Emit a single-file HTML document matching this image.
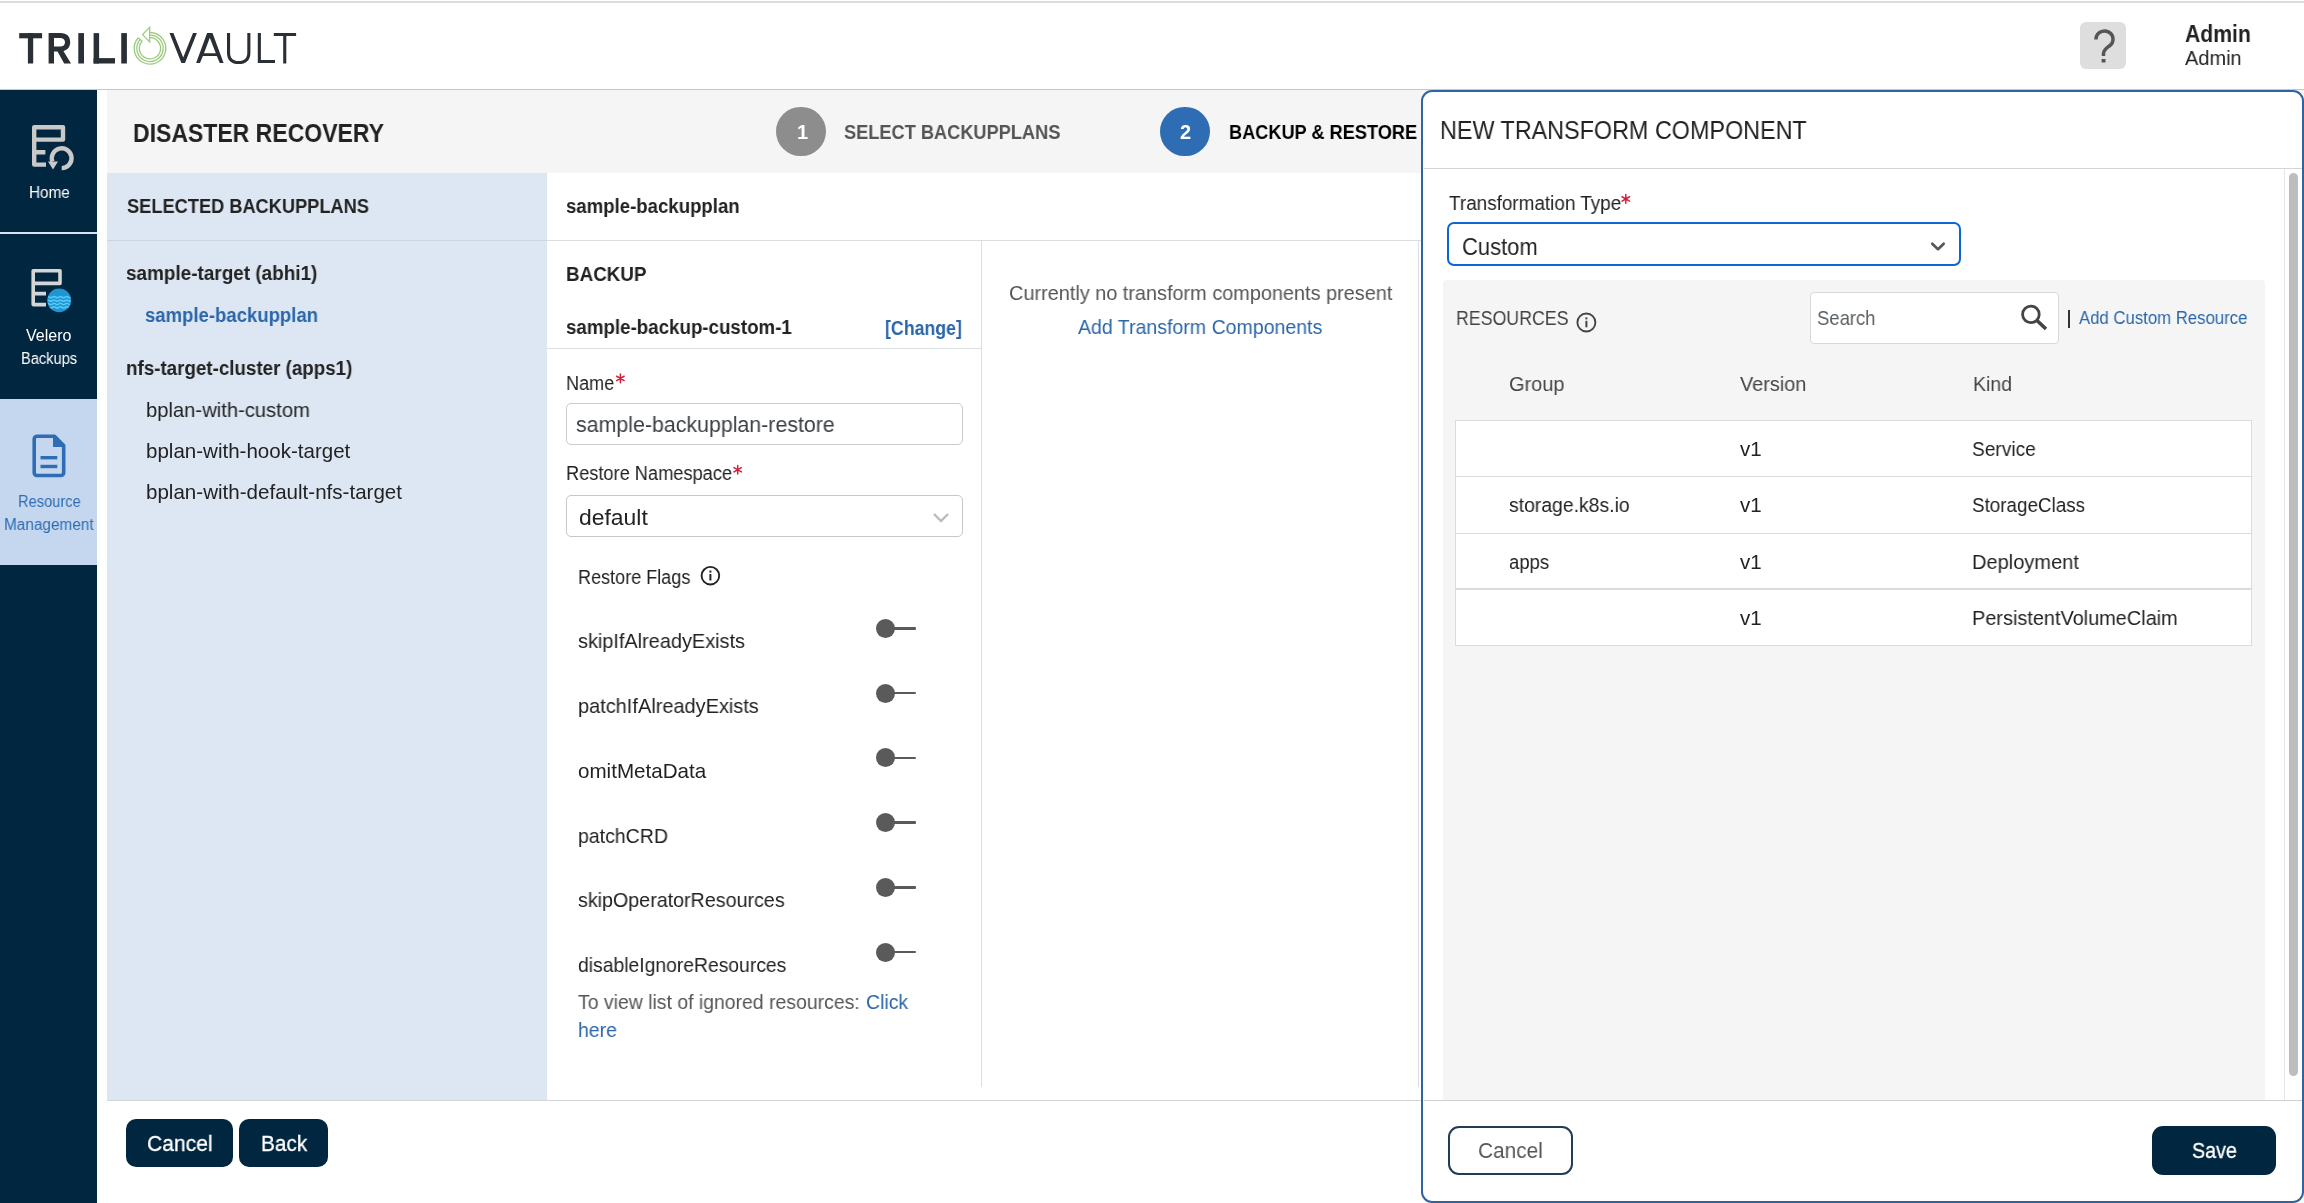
<!DOCTYPE html>
<html><head><meta charset="utf-8"><title>TrilioVault</title>
<style>
html,body{margin:0;padding:0;}
body{width:2304px;height:1203px;overflow:hidden;position:relative;background:#fff;font-family:"Liberation Sans",sans-serif;}
.t{position:absolute;white-space:nowrap;will-change:transform;}
.b{position:absolute;}
svg.b{overflow:visible;}
</style></head><body>
<div class="b" style="left:0px;top:1px;width:2304px;height:2px;background:#dcdcdc"></div>
<div class="b" style="left:0px;top:89px;width:2304px;height:1px;background:#c6c6c6"></div>
<div class="b" style="left:0px;top:90px;width:97px;height:1113px;background:#012740"></div>
<div class="b" style="left:0px;top:232px;width:97px;height:2px;background:#dbe3ec"></div>
<div class="b" style="left:0px;top:399px;width:97px;height:166px;background:#c5d7ee"></div>
<div class="b" style="left:107px;top:90px;width:2197px;height:83px;background:#f5f5f5"></div>
<div class="b" style="left:107px;top:173px;width:440px;height:928px;background:#dde7f3"></div>
<div class="b" style="left:107px;top:240px;width:440px;height:1px;background:#cad5e0"></div>
<div class="b" style="left:547px;top:240px;width:1757px;height:1px;background:#d9dee2"></div>
<div class="b" style="left:547px;top:348px;width:435px;height:1px;background:#d9dee2"></div>
<div class="b" style="left:981px;top:241px;width:1px;height:846px;background:#dcdfe2"></div>
<div class="b" style="left:1418px;top:241px;width:1px;height:846px;background:#dcdfe2"></div>
<div class="b" style="left:107px;top:1100px;width:2197px;height:1px;background:#d3d7db"></div>
<svg class="b" style="left:0;top:0" width="320" height="89" viewBox="0 0 320 89">
<g fill="#2a2f36">
<rect x="19.2" y="33.1" width="22.9" height="5.2"/><rect x="27.9" y="33.1" width="5.3" height="30.4"/>
<path d="M48.6 33.1H60.5C67 33.1 70.2 37 70.2 42.2C70.2 46.6 67.6 50 63.4 51L71 63.5H64.2L57.5 51.4H54V63.5H48.6ZM54 38.1V46.6H60C63.3 46.6 65 45 65 42.3C65 39.7 63.3 38.1 60 38.1Z"/>
<rect x="78.3" y="33.1" width="5.7" height="30.4"/>
<rect x="93.6" y="33.1" width="5.5" height="30.4"/><rect x="93.6" y="58.1" width="21.4" height="5.4"/>
<rect x="121.25" y="33.1" width="5.65" height="30.4"/>
</g>
<g fill="#2a2f36">
<path d="M169.5 33.1H173.4L183.2 57.6L193 33.1H196.9L185 63.1H181.4Z"/>
<path d="M196.1 63.1L207.1 33.1H212.5L223.6 63.1H219.8L216.8 55.9H202.9L200 63.1ZM204 53.3H215.8L209.8 37.8Z"/>
<path d="M227 33.1H230.1V52.7C230.1 58 233 61 238.7 61C244.4 61 247.3 58 247.3 52.7V33.1H250.4V52.9C250.4 60 246 64.1 238.7 64.1C231.4 64.1 227 60 227 52.9Z"/>
<path d="M257.8 33.1H260.9V59.9H275V63.1H257.8Z"/>
<path d="M273.8 33H296.1V35.9H286.3V63.4H283.2V35.9H273.8Z"/>
</g>
<g fill="none" stroke="#9bcb7c" stroke-width="1.3">
<path d="M138.26 37.73A15.8 15.8 0 1 0 150 32.5"/>
<path d="M140.19 39.47A13.2 13.2 0 1 0 150 35.1"/>
<path d="M142.12 41.21A10.6 10.6 0 1 0 150 37.7"/>
<path d="M149.6 27.4L142.6 34.6L149.6 41.9Z" stroke-linejoin="miter"/>
<path d="M138.26 37.73L142.12 41.21"/>
</g>
</svg>
<div class="b" style="left:2080px;top:22px;width:46px;height:47px;background:#dedede;border-radius:6px"></div>
<svg class="b" style="left:2081px;top:22.8px" width="46" height="47" viewBox="0 0 46 47">
<path d="M15 16.5A8.5 8.2 0 1 1 28.3 23C25.3 25.3 22.5 27 22.5 30.5V33" fill="none" stroke="#555" stroke-width="3.5"/>
<rect x="20.6" y="36" width="3.9" height="3.5" fill="#555"/>
</svg>
<div class="t" style="left:2185.40px;top:19.38px;font-size:24px;line-height:29px;color:#222;font-weight:700;transform:scaleX(0.8822);transform-origin:0 0;">Admin</div>
<div class="t" style="left:2185.40px;top:44.82px;font-size:21px;line-height:25px;color:#222;transform:scaleX(0.9513);transform-origin:0 0;">Admin</div>
<svg class="b" style="left:0;top:90px" width="97" height="500" viewBox="0 90 97 500">
<g fill="none" stroke="#c9c9c9" stroke-width="4.4" stroke-linejoin="round">
<path d="M46 164.6H34.2V127.2H63V139.6H34.2M34.2 152.3H45.4"/>
<path d="M61.7 168.1A9.9 9.9 0 1 0 52.4 161.6"/>
</g>
<path d="M48 161.5L58 161.5L53 169.5Z" fill="#c9c9c9"/>
<g fill="none" stroke="#d5d5d5" stroke-width="3.6" stroke-linejoin="round">
<path d="M46 304.6H33.2V270.7H60V283.4H33.2M33.2 293.6H46"/>
</g>
<circle cx="59.2" cy="300.4" r="11.9" fill="#1e96d4"/>
<clipPath id="vc"><circle cx="59.2" cy="300.4" r="11.6"/></clipPath>
<g fill="none" stroke="#58c9f6" stroke-width="1.5" clip-path="url(#vc)">
<path d="M46 297.2q1.6 -1.3 3.2 0t3.2 0t3.2 0t3.2 0t3.2 0t3.2 0t3.2 0t3.2 0"/>
<path d="M46 300.6q1.6 -1.3 3.2 0t3.2 0t3.2 0t3.2 0t3.2 0t3.2 0t3.2 0t3.2 0"/>
<path d="M46 304q1.6 -1.3 3.2 0t3.2 0t3.2 0t3.2 0t3.2 0t3.2 0t3.2 0t3.2 0"/>
<path d="M46 307.4q1.6 -1.3 3.2 0t3.2 0t3.2 0t3.2 0t3.2 0t3.2 0t3.2 0t3.2 0"/>
</g>
<g fill="none" stroke="#2e6db4" stroke-width="3.6" stroke-linejoin="round">
<path d="M37 436.3H54.5L63.7 445.5V472.7A2.8 2.8 0 0 1 60.9 475.5H37A2.8 2.8 0 0 1 34.2 472.7V439.1A2.8 2.8 0 0 1 37 436.3Z"/>
</g>
<path d="M53 436.3L63.7 447H53Z" fill="#2e6db4"/>
<rect x="40.5" y="456" width="16.8" height="3.4" fill="#2e6db4"/>
<rect x="40.5" y="464.8" width="16.8" height="3.4" fill="#2e6db4"/>
</svg>
<div class="t" style="left:28.50px;top:182.75px;font-size:16px;line-height:19px;color:#fff;transform:scaleX(0.9555);transform-origin:0 0;">Home</div>
<div class="t" style="left:26.20px;top:325.95px;font-size:16px;line-height:19px;color:#fff;transform:scaleX(0.9956);transform-origin:0 0;">Velero</div>
<div class="t" style="left:20.90px;top:348.65px;font-size:16px;line-height:19px;color:#fff;transform:scaleX(0.9153);transform-origin:0 0;">Backups</div>
<div class="t" style="left:17.50px;top:491.95px;font-size:16px;line-height:19px;color:#2e6db4;transform:scaleX(0.9168);transform-origin:0 0;">Resource</div>
<div class="t" style="left:3.80px;top:514.65px;font-size:16px;line-height:19px;color:#2e6db4;transform:scaleX(0.9593);transform-origin:0 0;">Management</div>
<div class="t" style="left:133.40px;top:116.61px;font-size:26.5px;line-height:32px;color:#222;font-weight:700;transform:scaleX(0.8682);transform-origin:0 0;">DISASTER RECOVERY</div>
<div class="b" style="left:776.25px;top:106.5px;width:49.5px;height:49.5px;background:#8d8d8d;border-radius:50%"></div>
<div class="t" style="left:796.70px;top:119.87px;font-size:20px;line-height:24px;color:#fff;font-weight:700;">1</div>
<div class="t" style="left:844.00px;top:119.32px;font-size:21px;line-height:25px;color:#555;font-weight:700;transform:scaleX(0.8666);transform-origin:0 0;">SELECT BACKUPPLANS</div>
<div class="b" style="left:1160.2px;top:106.5px;width:49.5px;height:49.5px;background:#2e6db4;border-radius:50%"></div>
<div class="t" style="left:1180.00px;top:119.87px;font-size:20px;line-height:24px;color:#fff;font-weight:700;">2</div>
<div class="t" style="left:1228.80px;top:119.32px;font-size:21px;line-height:25px;color:#000;font-weight:700;transform:scaleX(0.8648);transform-origin:0 0;">BACKUP & RESTORE</div>
<div class="t" style="left:126.70px;top:194.37px;font-size:20px;line-height:24px;color:#222;font-weight:700;transform:scaleX(0.9111);transform-origin:0 0;">SELECTED BACKUPPLANS</div>
<div class="t" style="left:125.90px;top:261.47px;font-size:20px;line-height:24px;color:#222;font-weight:700;transform:scaleX(0.9461);transform-origin:0 0;">sample-target (abhi1)</div>
<div class="t" style="left:144.70px;top:303.07px;font-size:20px;line-height:24px;color:#2a66a8;font-weight:700;transform:scaleX(0.9266);transform-origin:0 0;">sample-backupplan</div>
<div class="t" style="left:125.90px;top:356.47px;font-size:20px;line-height:24px;color:#222;font-weight:700;transform:scaleX(0.9386);transform-origin:0 0;">nfs-target-cluster (apps1)</div>
<div class="t" style="left:145.60px;top:398.26px;font-size:20.3px;line-height:24px;color:#222;transform:scaleX(0.9957);transform-origin:0 0;">bplan-with-custom</div>
<div class="t" style="left:145.60px;top:438.66px;font-size:20.3px;line-height:24px;color:#222;transform:scaleX(1.0124);transform-origin:0 0;">bplan-with-hook-target</div>
<div class="t" style="left:145.60px;top:480.36px;font-size:20.3px;line-height:24px;color:#222;transform:scaleX(1.0138);transform-origin:0 0;">bplan-with-default-nfs-target</div>
<div class="t" style="left:565.60px;top:194.27px;font-size:20px;line-height:24px;color:#222;font-weight:700;transform:scaleX(0.9298);transform-origin:0 0;">sample-backupplan</div>
<div class="t" style="left:565.60px;top:261.57px;font-size:20px;line-height:24px;color:#222;font-weight:700;transform:scaleX(0.9404);transform-origin:0 0;">BACKUP</div>
<div class="t" style="left:565.60px;top:315.27px;font-size:20px;line-height:24px;color:#222;font-weight:700;transform:scaleX(0.9362);transform-origin:0 0;">sample-backup-custom-1</div>
<div class="t" style="left:885.00px;top:314.99px;font-size:20.5px;line-height:25px;color:#2a66a8;font-weight:700;transform:scaleX(0.8660);transform-origin:0 0;">[Change]</div>
<div class="t" style="left:566.40px;top:370.77px;font-size:20px;line-height:24px;color:#222;transform:scaleX(0.9045);transform-origin:0 0;">Name</div>
<svg class="b" style="left:0;top:0" width="1" height="1"><path d="M620.40 374.10L620.40 382.70M616.68 376.25L624.12 380.55M624.12 376.25L616.68 380.55" stroke="#d0213a" stroke-width="1.5" stroke-linecap="round"/></svg>
<div class="b" style="left:565.5px;top:403.4px;width:397.7px;height:41.9px;border:1.3px solid #c8ccd0;border-radius:5px;box-sizing:border-box;background:#fff"></div>
<div class="t" style="left:576.40px;top:412.27px;font-size:22px;line-height:26px;color:#3a3f44;transform:scaleX(0.9707);transform-origin:0 0;">sample-backupplan-restore</div>
<div class="t" style="left:566.40px;top:461.37px;font-size:20px;line-height:24px;color:#222;transform:scaleX(0.9106);transform-origin:0 0;">Restore Namespace</div>
<svg class="b" style="left:0;top:0" width="1" height="1"><path d="M737.70 465.50L737.70 474.10M733.98 467.65L741.42 471.95M741.42 467.65L733.98 471.95" stroke="#d0213a" stroke-width="1.5" stroke-linecap="round"/></svg>
<div class="b" style="left:565.5px;top:494.5px;width:397.7px;height:42px;border:1.3px solid #c8c8c8;border-radius:5px;box-sizing:border-box;background:#fff"></div>
<div class="t" style="left:579.10px;top:503.70px;font-size:22.5px;line-height:27px;color:#222;transform:scaleX(1.0178);transform-origin:0 0;">default</div>
<svg class="b" style="left:930px;top:508px" width="22" height="20"><path d="M4 6L11 13L18 6" fill="none" stroke="#bbb" stroke-width="2.4"/></svg>
<div class="t" style="left:578.40px;top:565.21px;font-size:19.6px;line-height:24px;color:#222;transform:scaleX(0.9213);transform-origin:0 0;">Restore Flags</div>
<svg class="b" style="left:698px;top:564px" width="25" height="25"><circle cx="12.4" cy="11.7" r="8.8" fill="none" stroke="#222" stroke-width="1.9"/><rect x="11.4" y="10" width="2" height="6.5" fill="#222"/><rect x="11.4" y="6.6" width="2" height="2" fill="#222"/></svg>
<div class="t" style="left:578.40px;top:629.26px;font-size:20.3px;line-height:24px;color:#222;transform:scaleX(0.9812);transform-origin:0 0;">skipIfAlreadyExists</div>
<div class="b" style="left:876px;top:619.0px;width:19px;height:19px;background:#5a5a5a;border-radius:50%"></div>
<div class="b" style="left:890px;top:627.25px;width:25.5px;height:2.5px;background:#5a5a5a;border-radius:1px"></div>
<div class="t" style="left:578.40px;top:693.56px;font-size:20.3px;line-height:24px;color:#222;transform:scaleX(0.9842);transform-origin:0 0;">patchIfAlreadyExists</div>
<div class="b" style="left:876px;top:683.7px;width:19px;height:19px;background:#5a5a5a;border-radius:50%"></div>
<div class="b" style="left:890px;top:691.95px;width:25.5px;height:2.5px;background:#5a5a5a;border-radius:1px"></div>
<div class="t" style="left:578.40px;top:758.96px;font-size:20.3px;line-height:24px;color:#222;transform:scaleX(1.0158);transform-origin:0 0;">omitMetaData</div>
<div class="b" style="left:876px;top:748.4px;width:19px;height:19px;background:#5a5a5a;border-radius:50%"></div>
<div class="b" style="left:890px;top:756.65px;width:25.5px;height:2.5px;background:#5a5a5a;border-radius:1px"></div>
<div class="t" style="left:578.40px;top:823.86px;font-size:20.3px;line-height:24px;color:#222;transform:scaleX(0.9615);transform-origin:0 0;">patchCRD</div>
<div class="b" style="left:876px;top:813.1px;width:19px;height:19px;background:#5a5a5a;border-radius:50%"></div>
<div class="b" style="left:890px;top:821.35px;width:25.5px;height:2.5px;background:#5a5a5a;border-radius:1px"></div>
<div class="t" style="left:578.40px;top:888.26px;font-size:20.3px;line-height:24px;color:#222;transform:scaleX(0.9700);transform-origin:0 0;">skipOperatorResources</div>
<div class="b" style="left:876px;top:877.8px;width:19px;height:19px;background:#5a5a5a;border-radius:50%"></div>
<div class="b" style="left:890px;top:886.05px;width:25.5px;height:2.5px;background:#5a5a5a;border-radius:1px"></div>
<div class="t" style="left:578.40px;top:952.66px;font-size:20.3px;line-height:24px;color:#222;transform:scaleX(0.9525);transform-origin:0 0;">disableIgnoreResources</div>
<div class="b" style="left:876px;top:942.5px;width:19px;height:19px;background:#5a5a5a;border-radius:50%"></div>
<div class="b" style="left:890px;top:950.75px;width:25.5px;height:2.5px;background:#5a5a5a;border-radius:1px"></div>
<div class="t" style="left:578.30px;top:989.56px;font-size:20.3px;line-height:24px;color:#555;transform:scaleX(0.9576);transform-origin:0 0;">To view list of ignored resources:</div>
<div class="t" style="left:865.80px;top:989.56px;font-size:20.3px;line-height:24px;color:#2a66a8;transform:scaleX(0.9591);transform-origin:0 0;">Click</div>
<div class="t" style="left:578.30px;top:1017.96px;font-size:20.3px;line-height:24px;color:#2a66a8;transform:scaleX(0.9606);transform-origin:0 0;">here</div>
<div class="t" style="left:1008.70px;top:280.66px;font-size:20.3px;line-height:24px;color:#555;transform:scaleX(0.9801);transform-origin:0 0;">Currently no transform components present</div>
<div class="t" style="left:1078.00px;top:314.96px;font-size:20.3px;line-height:24px;color:#2a66a8;transform:scaleX(0.9634);transform-origin:0 0;">Add Transform Components</div>
<div class="b" style="left:1421px;top:90px;width:883px;height:1112.5px;border:2.6px solid #2e64a4;border-radius:11px;box-sizing:border-box;background:#fff"></div>
<div class="b" style="left:1423.6px;top:168px;width:878px;height:1px;background:#d4d4d4"></div>
<div class="t" style="left:1440.00px;top:114.86px;font-size:25.5px;line-height:31px;color:#222;transform:scaleX(0.9158);transform-origin:0 0;">NEW TRANSFORM COMPONENT</div>
<div class="t" style="left:1448.75px;top:191.07px;font-size:20px;line-height:24px;color:#222;transform:scaleX(0.9446);transform-origin:0 0;">Transformation Type</div>
<svg class="b" style="left:0;top:0" width="1" height="1"><path d="M1625.80 194.60L1625.80 203.20M1622.08 196.75L1629.52 201.05M1629.52 196.75L1622.08 201.05" stroke="#d0213a" stroke-width="1.5" stroke-linecap="round"/></svg>
<div class="b" style="left:1447px;top:221.8px;width:514.4px;height:44.3px;border:2.5px solid #0b66d6;border-radius:7px;box-sizing:border-box;background:#fff"></div>
<div class="t" style="left:1461.60px;top:231.58px;font-size:24px;line-height:29px;color:#222;transform:scaleX(0.9154);transform-origin:0 0;">Custom</div>
<svg class="b" style="left:1926px;top:237px" width="24" height="18"><path d="M6.2 6.7L12 12.2L17.7 6.7" fill="none" stroke="#555" stroke-width="2.6" stroke-linecap="round" stroke-linejoin="round"/></svg>
<div class="b" style="left:2284px;top:169px;width:1px;height:931px;background:#e6e6e6"></div>
<div class="b" style="left:2288.5px;top:173px;width:9.5px;height:903px;background:#bdbdbd;border-radius:5px"></div>
<div class="b" style="left:1442.5px;top:279.5px;width:822px;height:820px;background:#f5f5f5;border-radius:4px 4px 0 0"></div>
<div class="t" style="left:1455.80px;top:305.29px;font-size:20.5px;line-height:25px;color:#444;transform:scaleX(0.8661);transform-origin:0 0;">RESOURCES</div>
<svg class="b" style="left:1574px;top:310px" width="25" height="25"><circle cx="12.4" cy="12.5" r="9" fill="none" stroke="#444" stroke-width="1.9"/><rect x="11.4" y="10.8" width="2" height="6.5" fill="#444"/><rect x="11.4" y="7.4" width="2" height="2" fill="#444"/></svg>
<div class="b" style="left:1810.4px;top:292px;width:248.6px;height:51.5px;background:#fff;border:1.3px solid #d8d8d8;border-radius:4px;box-sizing:border-box"></div>
<div class="t" style="left:1817.00px;top:305.22px;font-size:21px;line-height:25px;color:#5a5f63;transform:scaleX(0.8797);transform-origin:0 0;">Search</div>
<svg class="b" style="left:2015px;top:298px" width="40" height="40"><circle cx="15.9" cy="16.4" r="8.3" fill="none" stroke="#444" stroke-width="2.8"/><path d="M22 22.5L31 31" stroke="#444" stroke-width="3.6" stroke-linecap="butt"/></svg>
<div class="b" style="left:2067.8px;top:310px;width:1.8px;height:18px;background:#333"></div>
<div class="t" style="left:2078.60px;top:306.66px;font-size:18.3px;line-height:22px;color:#2a66a8;transform:scaleX(0.9158);transform-origin:0 0;">Add Custom Resource</div>
<div class="t" style="left:1508.90px;top:370.99px;font-size:20.5px;line-height:25px;color:#444;transform:scaleX(0.9737);transform-origin:0 0;">Group</div>
<div class="t" style="left:1740.10px;top:370.99px;font-size:20.5px;line-height:25px;color:#444;transform:scaleX(0.9708);transform-origin:0 0;">Version</div>
<div class="t" style="left:1972.70px;top:370.99px;font-size:20.5px;line-height:25px;color:#444;transform:scaleX(0.9488);transform-origin:0 0;">Kind</div>
<div class="b" style="left:1454.7px;top:420.2px;width:797.3px;height:225.8px;background:#fff;border:1.3px solid #d8dcdf;box-sizing:border-box"></div>
<div class="b" style="left:1455px;top:475.9px;width:797px;height:1.3px;background:#d8dcdf"></div>
<div class="b" style="left:1455px;top:532.6px;width:797px;height:1.3px;background:#d8dcdf"></div>
<div class="b" style="left:1455px;top:588.4px;width:797px;height:1.3px;background:#d8dcdf"></div>
<div class="t" style="left:1740.00px;top:436.19px;font-size:20.5px;line-height:25px;color:#222;transform:scaleX(0.9816);transform-origin:0 0;">v1</div>
<div class="t" style="left:1971.90px;top:436.19px;font-size:20.5px;line-height:25px;color:#222;transform:scaleX(0.9327);transform-origin:0 0;">Service</div>
<div class="t" style="left:1508.50px;top:492.42px;font-size:20.5px;line-height:25px;color:#222;transform:scaleX(0.9451);transform-origin:0 0;">storage.k8s.io</div>
<div class="t" style="left:1740.00px;top:492.42px;font-size:20.5px;line-height:25px;color:#222;transform:scaleX(0.9816);transform-origin:0 0;">v1</div>
<div class="t" style="left:1971.90px;top:492.42px;font-size:20.5px;line-height:25px;color:#222;transform:scaleX(0.9188);transform-origin:0 0;">StorageClass</div>
<div class="t" style="left:1508.50px;top:548.65px;font-size:20.5px;line-height:25px;color:#222;transform:scaleX(0.9011);transform-origin:0 0;">apps</div>
<div class="t" style="left:1740.00px;top:548.65px;font-size:20.5px;line-height:25px;color:#222;transform:scaleX(0.9816);transform-origin:0 0;">v1</div>
<div class="t" style="left:1971.90px;top:548.65px;font-size:20.5px;line-height:25px;color:#222;transform:scaleX(0.9771);transform-origin:0 0;">Deployment</div>
<div class="t" style="left:1740.00px;top:604.88px;font-size:20.5px;line-height:25px;color:#222;transform:scaleX(0.9816);transform-origin:0 0;">v1</div>
<div class="t" style="left:1971.90px;top:604.88px;font-size:20.5px;line-height:25px;color:#222;transform:scaleX(0.9707);transform-origin:0 0;">PersistentVolumeClaim</div>
<div class="b" style="left:1423.6px;top:1100px;width:878px;height:1px;background:#cfcfcf"></div>
<div class="b" style="left:1448.1px;top:1126.1px;width:124.7px;height:49.1px;border:2px solid #223c56;border-radius:11px;box-sizing:border-box;background:#fff"></div>
<div class="t" style="left:1478.40px;top:1137.20px;font-size:22.5px;line-height:27px;color:#555;transform:scaleX(0.9257);transform-origin:0 0;">Cancel</div>
<div class="b" style="left:2151.7px;top:1126px;width:124.7px;height:49px;background:#012740;border-radius:11px"></div>
<div class="t" style="left:2191.80px;top:1137.20px;font-size:22.5px;line-height:27px;color:#fff;transform:scaleX(0.8752);transform-origin:0 0;-webkit-text-stroke:0.3px #fff;">Save</div>
<div class="b" style="left:125.9px;top:1119.1px;width:106.8px;height:47.7px;background:#012740;border-radius:10px"></div>
<div class="b" style="left:238.9px;top:1119.1px;width:88.8px;height:47.7px;background:#012740;border-radius:10px"></div>
<div class="t" style="left:146.60px;top:1130.20px;font-size:22.5px;line-height:27px;color:#fff;transform:scaleX(0.9371);transform-origin:0 0;-webkit-text-stroke:0.3px #fff;">Cancel</div>
<div class="t" style="left:260.90px;top:1130.20px;font-size:22.5px;line-height:27px;color:#fff;transform:scaleX(0.9242);transform-origin:0 0;-webkit-text-stroke:0.3px #fff;">Back</div>
</body></html>
